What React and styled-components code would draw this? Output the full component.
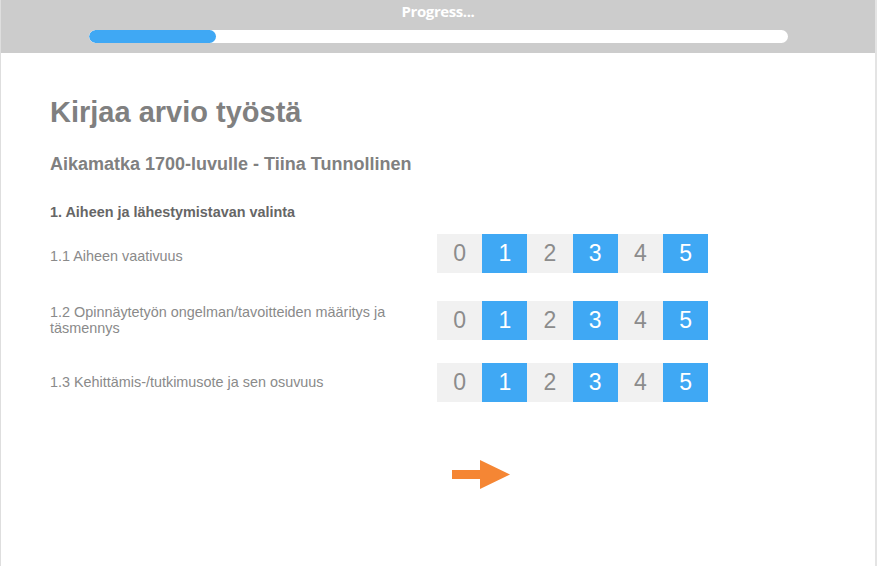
import React from 'react'
import styled, { createGlobalStyle } from 'styled-components'

const GlobalStyle = createGlobalStyle`
  html, body {
    margin: 0;
    padding: 0;
    background: #ffffff;
  }
  body {
    font-family: "Liberation Sans", Arial, sans-serif;
  }
`

const Page = styled.div`
  width: 877px;
  height: 566px;
  box-sizing: border-box;
  border-left: 1px solid #dedede;
  border-right: 2px solid #e4e4e4;
  overflow: hidden;
`

const Header = styled.div`
  height: 53px;
  background: #cccccc;
  box-sizing: border-box;
  padding-top: 2px;
  display: flex;
  flex-direction: column;
  align-items: center;
`

const HeaderTitle = styled.div`
  font-family: "Open Sans", sans-serif;
  font-weight: 700;
  font-size: 15px;
  line-height: 18px;
  color: #ffffff;
  letter-spacing: -0.4px;
`

const Track = styled.div`
  margin-top: 10px;
  width: 699px;
  height: 13px;
  border-radius: 7px;
  background: #ffffff;
  overflow: hidden;
`

const Fill = styled.div`
  height: 100%;
  border-radius: 7px;
  background: #3fa8f4;
`

const Content = styled.div`
  padding: 42px 0 0 49px;
`

const Title = styled.h1`
  margin: 0;
  font-size: 29px;
  line-height: 34px;
  font-weight: 700;
  color: #808080;
`

const Subtitle = styled.h2`
  margin: 24px 0 0;
  font-size: 18px;
  line-height: 22px;
  font-weight: 700;
  color: #808080;
`

const Section = styled.h3`
  margin: 28px 0 0;
  font-size: 14.4px;
  line-height: 18px;
  font-weight: 700;
  color: #666666;
`

const Rows = styled.div`
  margin-top: 13px;
  display: flex;
  flex-direction: column;
`

const Row = styled.div`
  display: grid;
  grid-template-columns: 387px auto;
  align-items: center;
  margin-top: ${p => p.$gap}px;
`

const Label = styled.div`
  font-size: 14.4px;
  line-height: 16px;
  color: #8a8a8a;
  padding-right: 40px;
  padding-top: ${p => p.$shift || 0}px;
`

const Scale = styled.div`
  display: flex;
`

const Cell = styled.div`
  width: 45.2px;
  height: 38.5px;
  display: flex;
  align-items: center;
  justify-content: center;
  font-size: 23px;
  background: ${p => (p.$on ? '#3fa8f4' : '#f1f1f1')};
  color: ${p => (p.$on ? '#ffffff' : '#8c8c8c')};
`

const Next = styled.div`
  margin: 58px 0 0 401px;
  width: 60px;
  height: 29px;
`

const criteria = [
  { text: '1.1 Aiheen vaativuus', gap: 0, shift: 6 },
  { text: '1.2 Opinnäytetyön ongelman/tavoitteiden määritys ja täsmennys', gap: 28.5, shift: 0 },
  { text: '1.3 Kehittämis-/tutkimusote ja sen osuvuus', gap: 23.5, shift: 0 },
]

export default function App() {
  return (
    <>
      <GlobalStyle />
      <Page>
        <Header>
          <HeaderTitle>Progress...</HeaderTitle>
          <Track>
            <Fill style={{ width: '18.2%' }} />
          </Track>
        </Header>
        <Content>
          <Title>Kirjaa arvio työstä</Title>
          <Subtitle>Aikamatka 1700-luvulle - Tiina Tunnollinen</Subtitle>
          <Section>1. Aiheen ja lähestymistavan valinta</Section>
          <Rows>
            {criteria.map(c => (
              <Row key={c.text} $gap={c.gap}>
                <Label $shift={c.shift}>{c.text}</Label>
                <Scale>
                  {[0, 1, 2, 3, 4, 5].map(n => (
                    <Cell key={n} $on={n % 2 === 1}>{n}</Cell>
                  ))}
                </Scale>
              </Row>
            ))}
          </Rows>
          <Next>
            <svg width="60" height="29" viewBox="0 0 60 29">
              <path d="M1 10 H29 V0 L59 14.5 L29 29 V19 H1 Z" fill="#f58634" />
            </svg>
          </Next>
        </Content>
      </Page>
    </>
  )
}
